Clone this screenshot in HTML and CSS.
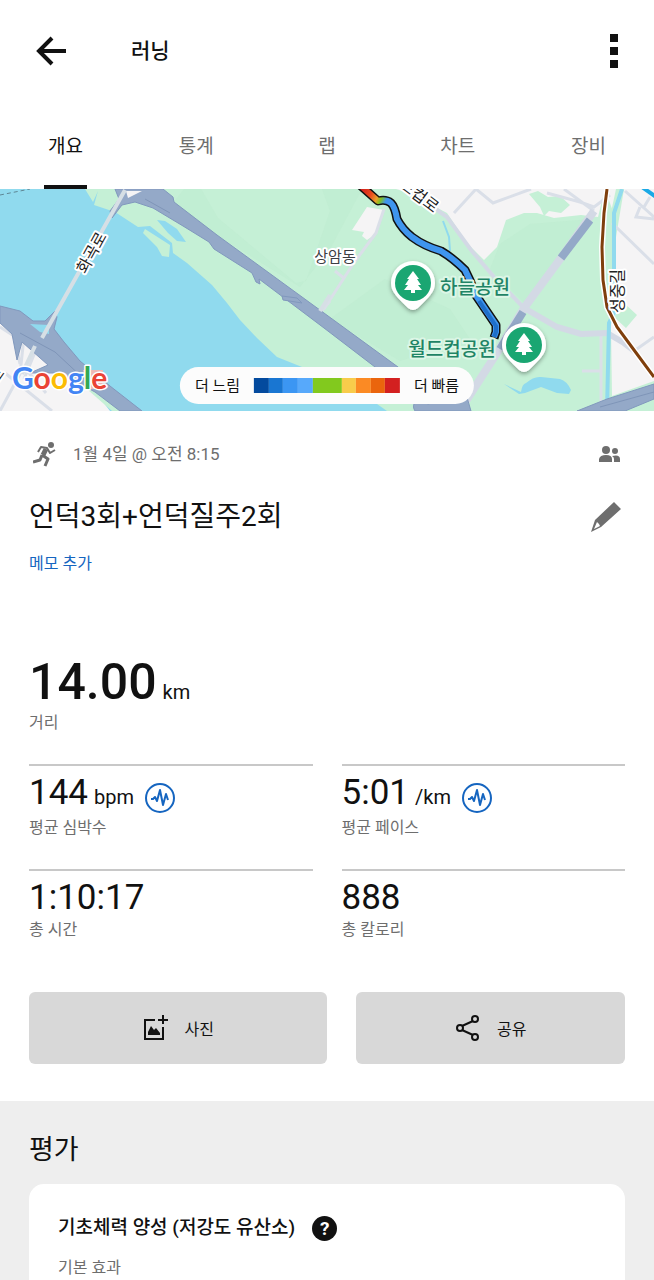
FILE: index.html
```html
<!DOCTYPE html>
<html lang="ko">
<head>
    <meta charset="UTF-8">
    <meta name="viewport" content="width=device-width, initial-scale=1.0">
    <title>러닝</title>
    <link rel="stylesheet" href="styles.css">
</head>
<body>

    <!-- Top bar -->
    <header class="topbar">
        <button class="icon-button" aria-label="뒤로">
            <svg width="32" height="32" viewBox="0 0 32 32" fill="none" stroke="#111" stroke-width="4"><path d="M17 3 L4 16 L17 29 M4 16 H31"/></svg>
        </button>
        <h1 class="topbar-title">러닝</h1>
        <button class="icon-button" aria-label="메뉴">
            <svg width="8" height="34" viewBox="0 0 8 34" fill="#111"><path d="M0 0h8v8H0zM0 13h8v8H0zM0 26h8v8H0z"/></svg>
        </button>
    </header>

    <!-- Tabs -->
    <nav class="tabs">
        <a href="#" class="tab active">개요</a>
        <a href="#" class="tab">통계</a>
        <a href="#" class="tab">랩</a>
        <a href="#" class="tab">차트</a>
        <a href="#" class="tab">장비</a>
    </nav>

    <!-- Map -->
    <section class="map">
        <svg class="map-canvas" viewBox="0 0 654 222" preserveAspectRatio="xMidYMid slice">
            <defs>
                <linearGradient id="pace" gradientUnits="userSpaceOnUse" x1="362" y1="0" x2="386" y2="12">
                    <stop offset="0" stop-color="#d3221f"/>
                    <stop offset=".4" stop-color="#ea4a1c"/>
                    <stop offset=".65" stop-color="#e9a02a"/>
                    <stop offset=".8" stop-color="#7fc21e"/>
                    <stop offset="1" stop-color="#3f95ee"/>
                </linearGradient>
                <filter id="pin-shadow" x="-30%" y="-30%" width="160%" height="170%">
                    <feDropShadow dx="0" dy="2" stdDeviation="2" flood-opacity=".35"/>
                </filter>
                <g id="pin">
                    <path filter="url(#pin-shadow)" fill="#fff" d="M0-22A22 22 0 0 1 22 0C22 9 16 14 5 25Q0 29-5 25C-16 14-22 9-22 0A22 22 0 0 1 0-22Z"/>
                    <circle r="18" fill="#1aa672"/>
                    <path fill="#fff" d="M0-12L6-4H4L8 2H5L9 7H2V10H-2V7H-9L-5 2H-8L-4-4H-6Z"/>
                </g>
            </defs>

            <rect width="654" height="222" fill="#90daee"/>
            <path d="M0 6L30 0" stroke="#5f8795" stroke-dasharray="4 3" fill="none"/>

            <!-- river bank and parks -->
            <path fill="#c5f0d6" d="M85 0L93 13L98 2L94 16L115 23L138 38L150 37L172 54L173 64L187 74L212 96L227 114L240 131L257 149L277 168L302 178L350 196L387 222H654V0Z"/>
            <path fill="#bdecd0" d="M184 0H201L218 29L296 94L306 92L330 22L322 0H362L330 60L300 98L217 46L174 13Z" opacity=".5"/>
            <path fill="#bdecd0" d="M500 55L530 35L592 30L560 65L525 115L490 80ZM330 130L385 90L450 120L470 150L400 172Z" opacity=".5"/>
            <path fill="#c5f0d6" d="M145 40L170 56L169 68L162 67L157 58L143 44Z"/>
            <path fill="#90daee" d="M157 31L165 32L177 40L186 53L177 52L168 44Z"/>

            <!-- built up land -->
            <path fill="#f5f4f5" d="M396 0L409 4L447 24L467 54L484 71L497 58L506 31L524 24L537 24L554 29L581 26L598 28L605 0Z"/>
            <path fill="#f5f4f5" d="M605 0H654V192L612 207L611 140L613 60L617 34Z"/>
            <path fill="#f5f4f5" d="M367 18L384 21L377 44L367 51L362 47L364 43L352 41Z"/>
            <path fill="#f5f4f5" d="M0 132L20 148L60 172L90 196L110 222H0Z"/>
            <path fill="#c5f0d6" d="M529 5L538 2L548 8L560 7L570 16L561 24L549 22L544 27L540 18Z"/>
            <path fill="#c5f0d6" d="M624 114L637 126L626 139L614 128ZM624 0H616L610 28L614 60Z"/>
            <path fill="#c5f0d6" d="M88 201L112 222H125L100 202Z"/>

            <!-- small roads -->
            <g fill="none" stroke="#dadfe8" stroke-width="3">
                <path d="M384 20L376 44L353 75L324 120M335 82L345 90M320 124L330 112"/>
                <path d="M476 0L493 14L531 0M454 24L476 0M547 4L580 13L594 18L610 6M564 0L594 22"/>
                <path d="M612 34L654 75M625 2L654 28M640 18L636 28L654 30M650 8L644 18"/>
                <path d="M582 182H601M601 145V218M634 162L654 148"/>
                <path d="M0 138L14 147L20 175M24 148L20 185L0 222M38 156L24 190M5 184L52 222M24 178L46 204"/>
            </g>
            <g fill="none" stroke="#d3d9e5" stroke-width="6">
                <path stroke-width="4" d="M407 0L447 28L471 61L494 88L524 119"/>
                <path d="M524 119L557 138L581 145L607 144L624 154L636 163"/>
                <path stroke-width="8" d="M594 22L561 69L524 119L497 164L466 212"/>
            </g>
            <path d="M590 31L561 69M523 123L500 160" stroke="#94a9c8" stroke-width="8" fill="none"/>

            <!-- stream and pond -->
            <path d="M443 32L449 48L450 62" stroke="#90daee" stroke-width="2" fill="none"/>
            <path d="M622 0L614 24L614 124L609 134L607 222" stroke="#90daee" stroke-width="4" fill="none"/>
            <path fill="#90daee" d="M504 195L521 203Q522 195 526 194Q534 187 541 188L560 190Q567 192 571 201L569 205L557 204L541 198L525 204L519 205Z"/>
            <path d="M642 -2L656 8" stroke="#1aa9e6" stroke-width="4" fill="none"/>

            <!-- highways -->
            <g fill="#94a9c8" stroke="#8198bd" stroke-width="1">
                <path d="M115 0H163L173 8L174 13L217 46L324 124L398 178L450 222H434L375 178L324 139L259 90L260 95L256 93L252 84L214 60L209 53L183 37L153 19L135 13L122 16L112 29L110 22L119 10Z"/>
                <path d="M282 107L297 109L302 114L283 111Z"/>
                <path d="M0 117L20 122L33 132H45L55 122L57 128L54 140L64 153L80 172L110 197L142 222H120L95 203L60 184L30 184L48 176L22 153L17 171L12 145L0 134Z"/>
                <path d="M577 222L607 210L654 195V210L625 222ZM415 222C410 214 418 209 428 215L442 211L466 205L471 222Z"/>
            </g>
            <path fill="#f5f4f5" d="M126 2H142L128 9Z"/>
            <path fill="#90daee" d="M30 135L49 136L49 145L40 143Z"/>
            <path d="M20 144L55 163L84 190M145 10L170 24M600 218L654 203" stroke="#7f95b8" fill="none" stroke-width="1"/>
            <path d="M125 1L42 149M330 106L320 122M35 157L22 185" stroke="#d6dfe5" stroke-width="4" fill="none"/>
            <path fill="#edb9b5" d="M83 181H103V200H88Z"/>

            <!-- railway -->
            <path d="M607 0L604 24L602 58L603 91L607 118L617 138L634 161L654 188" stroke="#fff" stroke-width="6" fill="none"/>
            <path d="M607 0L604 24L602 58L603 91L607 118L617 138L634 161L654 188" stroke="#7f3f0c" stroke-width="3" fill="none"/>

            <!-- running route -->
            <g fill="none" stroke-linejoin="round">
                <path stroke="#111" stroke-width="9" d="M360 -4L378 12Q386 10 391 14Q395 18 397 30Q402 40 412 48Q424 57 441 62Q453 69 465 81Q471 92 475 105L496 136V143L494 149"/>
                <path stroke="url(#pace)" stroke-width="6" d="M360 -4L378 12Q386 10 391 14Q395 18 397 30Q402 40 412 48Q424 57 441 62Q453 69 465 81Q471 92 475 105L496 136V143L494 148"/>
                <path stroke="#1f6fca" stroke-width="4" d="M479 112L496 137V143L494 148"/>
            </g>

            <!-- map labels -->
            <g class="map-label" text-anchor="middle">
                <text x="335" y="73">상암동</text>
                <text class="road" transform="translate(92 64) rotate(-61)" y="5">화곡로</text>
                <text class="road" transform="translate(419 7) rotate(37)" y="5">드컵로</text>
                <text class="road" transform="translate(618 102) rotate(-90)" y="5">성중길</text>
                <text class="road" transform="translate(-3 187) rotate(-55)" y="5">로</text>
                <text class="park" x="475" y="105">하늘공원</text>
                <text class="park" x="452" y="167">월드컵공원</text>
            </g>
            <use href="#pin" x="413" y="94"/>
            <use href="#pin" x="524" y="156"/>

            <text class="google" x="12" y="200"><tspan fill="#4285f4">G</tspan><tspan fill="#ea4335">o</tspan><tspan fill="#fbbc04">o</tspan><tspan fill="#4285f4">g</tspan><tspan fill="#34a853">l</tspan><tspan fill="#ea4335">e</tspan></text>
        </svg>

        <div class="legend">
            <span>더 느림</span>
            <div class="legend-bar">
                <i class="c1"></i><i class="c2"></i><i class="c3"></i><i class="c4"></i><i class="c5"></i><i class="c6"></i><i class="c7"></i><i class="c8"></i><i class="c9"></i>
            </div>
            <span>더 빠름</span>
        </div>
    </section>

    <!-- Activity info -->
    <main class="activity">
        <div class="meta">
            <svg width="24" height="26" viewBox="0 0 24 26" fill="none" stroke="#6e6e6e" stroke-linejoin="round">
                <circle cx="18" cy="4" r="3" fill="#6e6e6e" stroke="none"/>
                <path stroke-width="2" d="M5 11L8 6L14 7L17 12L22 9"/>
                <path stroke-width="5" d="M13 8L10 14"/>
                <path stroke-width="3" d="M9 14L15 18L12 25M9 14L7 19L0 21"/>
            </svg>
            <span class="date">1월 4일 @ 오전 8:15</span>
            <svg width="22" height="16" viewBox="0 0 22 16" fill="#6e6e6e">
                <circle cx="7" cy="4" r="4"/><circle cx="16" cy="5" r="3"/>
                <path d="M0 16V13Q1 9 7 9T13 13V16ZM15 16V13Q15 11 13 10Q21 8 21 13V16Z"/>
            </svg>
        </div>

        <div class="name-row">
            <h2 class="name">언덕3회+언덕질주2회</h2>
            <button class="icon-button" aria-label="수정">
                <svg width="32" height="32" viewBox="0 0 32 32"><path fill="#6e6e6e" fill-rule="evenodd" d="M24 1L31 8L11 26L1 31L5 19ZM7 21L4 28L10 25L9 23Z"/></svg>
            </button>
        </div>
        <a href="#" class="memo">메모 추가</a>

        <div class="distance">
            <div class="value big">14.00 <small>km</small></div>
            <div class="label">거리</div>
        </div>

        <div class="stats">
            <div class="stat">
                <div class="value">144 <small>bpm</small>
                    <svg class="pulse" viewBox="0 0 32 32"><circle cx="16" cy="16" r="14"/><path d="M7 17H9L11 15L13 19L16 8L19 23L22 12L24 18"/></svg>
                </div>
                <div class="label">평균 심박수</div>
            </div>
            <div class="stat">
                <div class="value">5:01 <small>/km</small>
                    <svg class="pulse" viewBox="0 0 32 32"><circle cx="16" cy="16" r="14"/><path d="M7 17H9L11 15L13 19L16 8L19 23L22 12L24 18"/></svg>
                </div>
                <div class="label">평균 페이스</div>
            </div>
            <div class="stat last">
                <div class="value">1:10:17</div>
                <div class="label">총 시간</div>
            </div>
            <div class="stat last">
                <div class="value">888</div>
                <div class="label">총 칼로리</div>
            </div>
        </div>

        <div class="actions">
            <button class="action">
                <svg width="26" height="26" viewBox="0 0 26 26">
                    <path fill="none" stroke="#111" stroke-width="2" d="M13 5H3V24H21V12"/>
                    <path fill="none" stroke="#111" stroke-width="2" d="M21 0V9M16 5H26"/>
                    <path fill="#111" d="M6 20V17L9 11L12 15L14 13L18 18V20Z"/>
                </svg>
                사진
            </button>
            <button class="action">
                <svg width="26" height="26" viewBox="0 0 26 26" fill="none" stroke="#111" stroke-width="2">
                    <path d="M7 11L18 6M7 15L18 20"/>
                    <circle cx="5" cy="13" r="3"/><circle cx="20" cy="4" r="3"/><circle cx="20" cy="22" r="3"/>
                </svg>
                공유
            </button>
        </div>
    </main>

    <!-- Evaluation -->
    <section class="evaluation">
        <h2 class="section-title">평가</h2>
        <div class="card">
            <div class="card-head">
                <h3>기초체력 양성 (저강도 유산소)</h3>
                <button class="help" aria-label="도움말">?</button>
            </div>
            <div class="label">기본 효과</div>
        </div>
    </section>

</body>
</html>
```
FILE: styles.css
```css
* {
    box-sizing: border-box;
}
body {
    font-family: Roboto, "Noto Sans CJK KR", sans-serif;
    background-color: #fff;
    color: #111;
    margin: 0;
    min-height: 100vh;
    display: flex;
    flex-direction: column;
}
h1, h2, h3 {
    margin: 0;
    font-weight: 400;
}
a {
    text-decoration: none;
}
svg {
    display: block;
    flex: none;
}
button {
    font-family: inherit;
    color: #111;
    border: none;
    padding: 0;
    cursor: pointer;
}
.icon-button {
    background: none;
}

/* Top bar */
.topbar {
    display: flex;
    align-items: center;
    height: 102px;
    padding: 0 36px 0 35px;
}
.topbar-title {
    flex: 1;
    margin-left: 64px;
    font-size: 21px;
    font-weight: 500;
    line-height: 30px;
}

/* Tabs */
.tabs {
    display: flex;
    height: 87px;
}
.tab {
    flex: 1;
    display: flex;
    flex-direction: column;
    align-items: center;
    padding-top: 30px;
    font-size: 19px;
    line-height: 30px;
    color: #6e6e6e;
}
.tab.active {
    color: #111;
}
.tab.active::after {
    content: "";
    width: 43px;
    height: 4px;
    margin-top: auto;
    background-color: #111;
}

/* Map */
.map {
    position: relative;
    height: 222px;
    overflow: hidden;
}
.map-canvas {
    width: 100%;
    height: 100%;
}
.map-label {
    font-size: 15px;
    fill: #3c4043;
    stroke: #fff;
    stroke-width: 4px;
    stroke-linejoin: round;
    paint-order: stroke;
}
.map-label .road {
    font-size: 16px;
    fill: #222;
}
.map-label .park {
    font-size: 19px;
    font-weight: 500;
    fill: #1f8465;
    stroke: #dcf6e6;
}
.google {
    font-family: Lato, sans-serif;
    font-size: 30px;
    font-weight: 700;
    stroke: #fff;
    stroke-width: 3px;
    stroke-linejoin: round;
    paint-order: stroke;
}
.legend {
    position: absolute;
    bottom: 7px;
    left: 50%;
    transform: translateX(-50%);
    display: flex;
    align-items: center;
    gap: 14px;
    height: 37px;
    padding: 0 15px;
    border-radius: 19px;
    background-color: #fcfcfc;
    font-size: 15px;
    line-height: 20px;
    white-space: nowrap;
}
.legend-bar {
    display: flex;
    width: 146px;
    height: 15px;
}
.legend-bar i {
    flex: 1;
}
.legend-bar .c1 { background-color: #034a9e; }
.legend-bar .c2 { background-color: #1976d2; }
.legend-bar .c3 { background-color: #3b96f3; }
.legend-bar .c4 { background-color: #57a9fb; }
.legend-bar .c5 { background-color: #82c91e; flex: 2; }
.legend-bar .c6 { background-color: #f8cc4b; }
.legend-bar .c7 { background-color: #fb8a24; }
.legend-bar .c8 { background-color: #ea650d; }
.legend-bar .c9 { background-color: #d32020; }

/* Activity info */
.activity {
    padding: 28px 29px 37px;
}
.meta {
    display: flex;
    align-items: center;
    height: 30px;
    padding: 0 4px;
}
.date {
    flex: 1;
    margin-left: 16px;
    font-size: 17px;
    line-height: 24px;
    color: #6e6e6e;
}
.name-row {
    display: flex;
    align-items: center;
    justify-content: space-between;
    margin-top: 26px;
    padding-right: 3px;
}
.name {
    font-size: 28px;
    line-height: 44px;
}
.memo {
    display: block;
    margin-top: 13px;
    font-size: 16px;
    line-height: 24px;
    color: #1565c0;
}
.label {
    font-size: 16px;
    line-height: 22px;
    color: #6e6e6e;
}
.value {
    display: flex;
    align-items: baseline;
    gap: 6px;
    height: 48px;
    font-size: 35px;
    line-height: 48px;
}
.value small {
    font-size: 20px;
    line-height: 24px;
}
.value.big {
    height: 60px;
    font-size: 50px;
    font-weight: 500;
    line-height: 60px;
}
.value.big small {
    font-weight: 400;
}
.distance {
    margin-top: 76px;
    margin-bottom: 30px;
}

/* Stats */
.stats {
    display: grid;
    grid-template-columns: 1fr 1fr;
    column-gap: 29px;
}
.stat {
    height: 105px;
    padding-top: 3px;
    border-top: 2px solid #c8c8c8;
}
.stat.last {
    height: 123px;
}
.last .label {
    margin-top: -3px;
}
.pulse {
    width: 32px;
    height: 32px;
    margin-left: 4px;
    align-self: center;
    margin-top: 10px;
    fill: none;
    stroke: #1565c0;
    stroke-width: 2px;
    stroke-linejoin: round;
}

/* Buttons */
.actions {
    display: grid;
    grid-template-columns: 10fr 9fr;
    gap: 29px;
}
.action {
    display: flex;
    align-items: center;
    justify-content: center;
    gap: 16px;
    height: 72px;
    border-radius: 6px;
    background-color: #d8d8d8;
    font-size: 16px;
}

/* Evaluation */
.evaluation {
    flex: 1;
    display: flex;
    flex-direction: column;
    padding: 29px 29px 0;
    background-color: #eee;
}
.section-title {
    font-size: 27px;
    line-height: 40px;
}
.card {
    flex: 1;
    margin-top: 14px;
    padding: 29px 29px 0;
    border-radius: 15px 15px 0 0;
    background-color: #fff;
}
.card-head {
    display: flex;
    align-items: center;
    gap: 17px;
    margin-bottom: 14px;
}
.card-head h3 {
    font-size: 19px;
    font-weight: 500;
    line-height: 30px;
}
.help {
    width: 25px;
    height: 25px;
    border-radius: 50%;
    background-color: #111;
    color: #fff;
    font-size: 19px;
    font-weight: 700;
    line-height: 25px;
}
```
